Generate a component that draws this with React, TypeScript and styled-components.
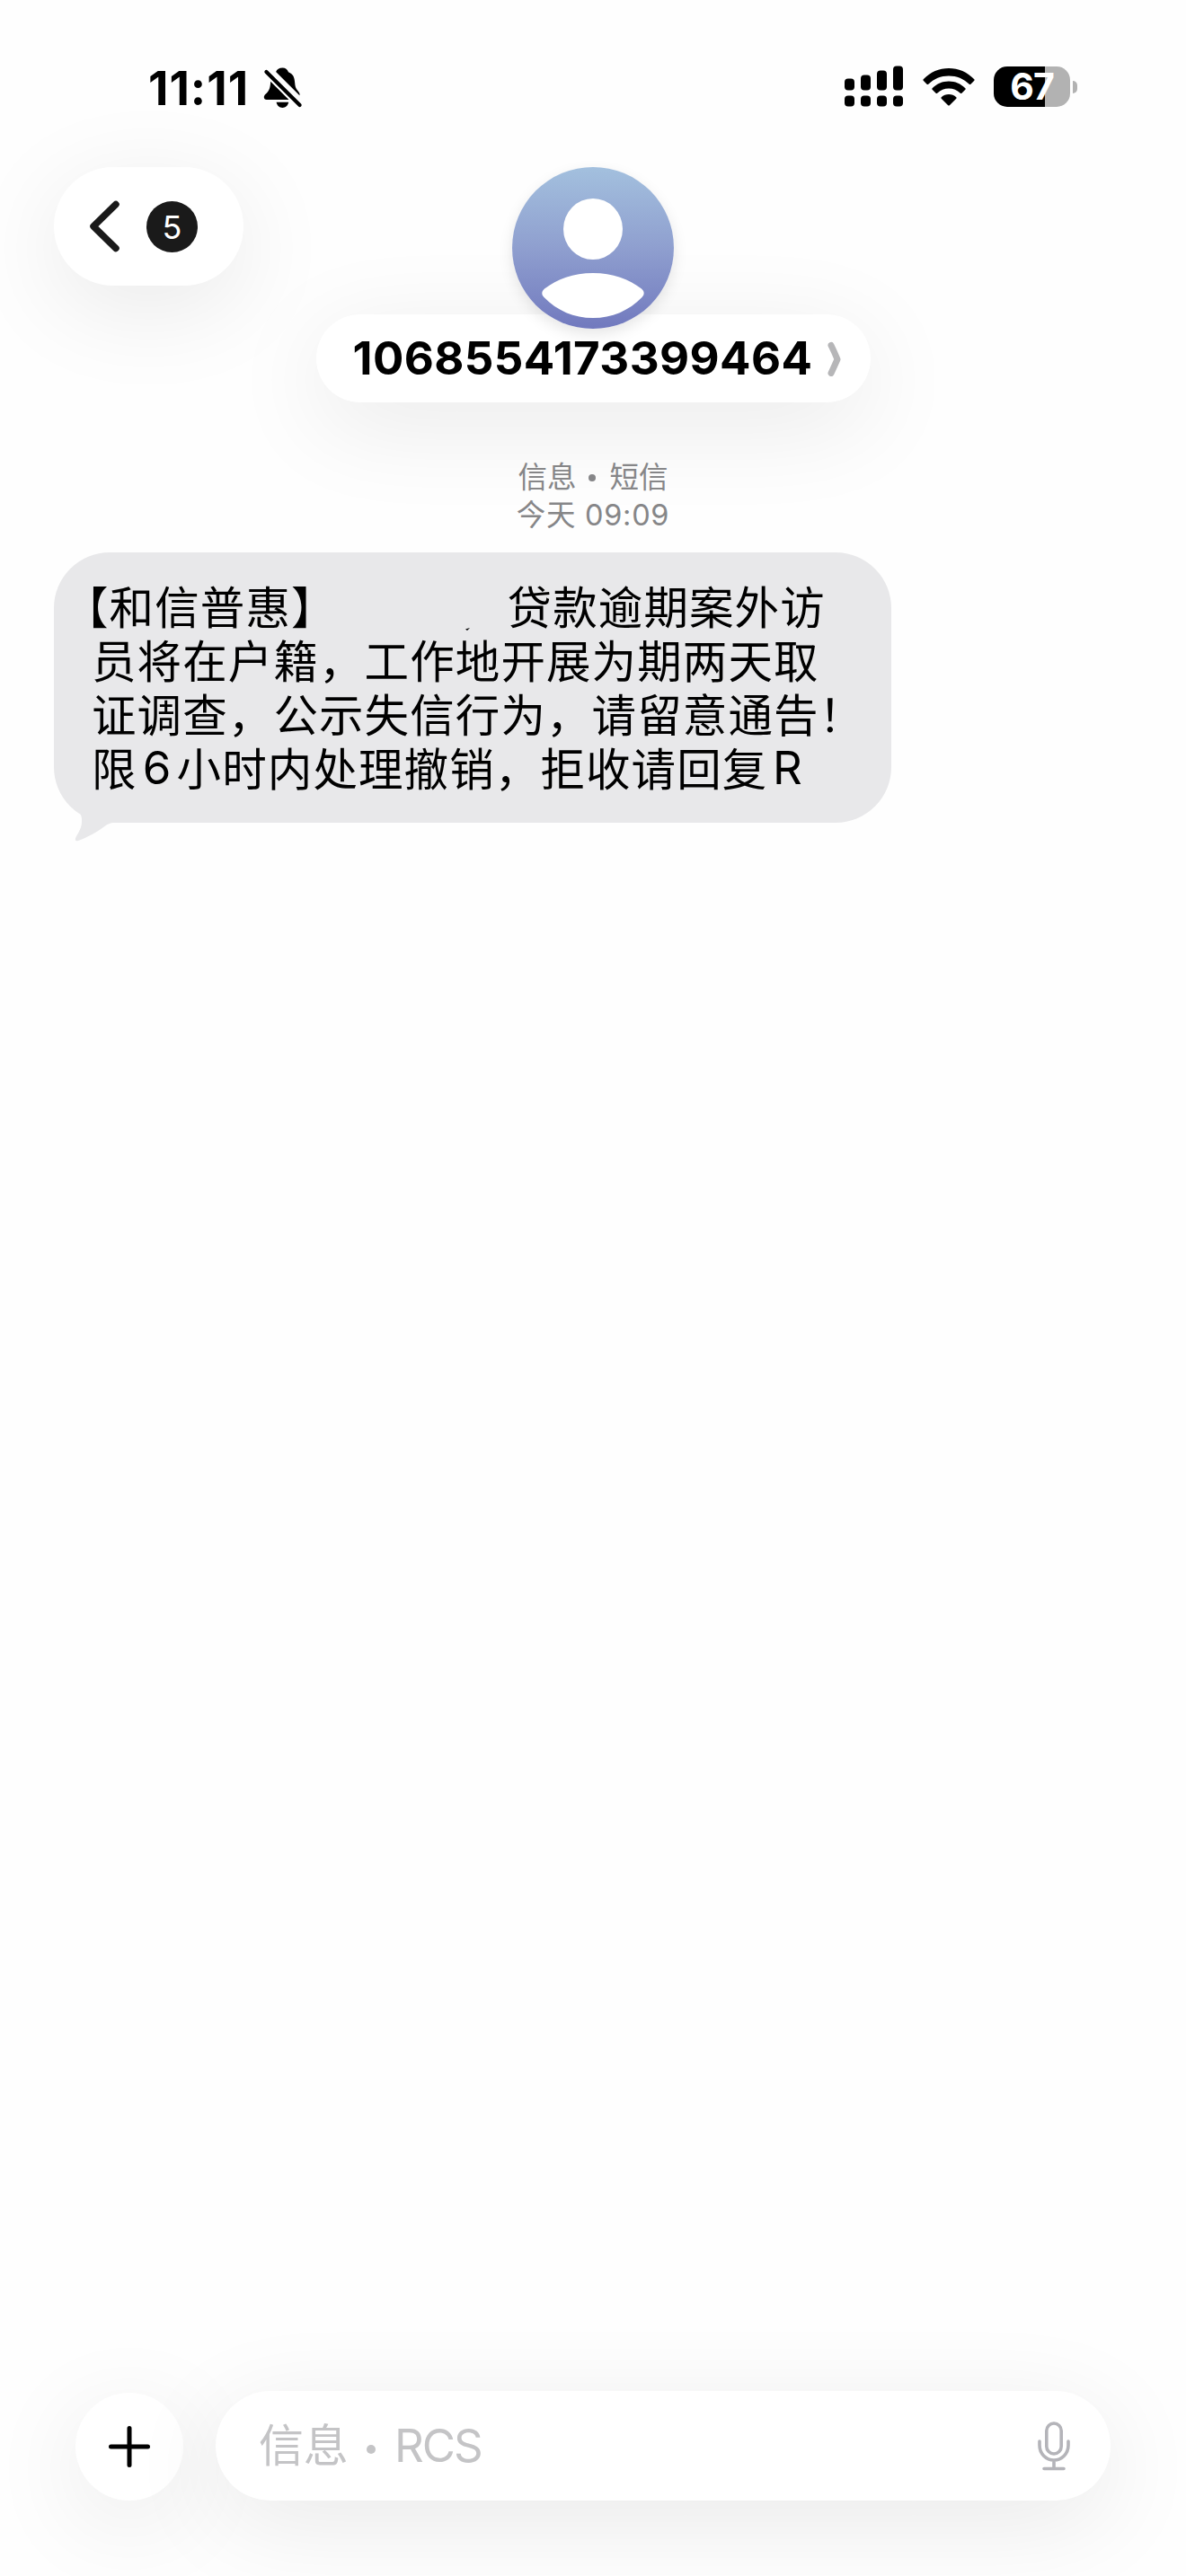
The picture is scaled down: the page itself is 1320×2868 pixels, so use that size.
import React from "react";
import styled, { createGlobalStyle } from "styled-components";

const GlobalStyle = createGlobalStyle`
  *, *::before, *::after { box-sizing: border-box; }
  html, body { margin: 0; padding: 0; background: #fff; }
  body { font-family: Inter, "Noto Sans CJK SC", sans-serif; color: #000; }
  svg { display: block; flex: none; }
`;

const Screen = styled.div`
  width: 1320px;
  height: 2868px;
  display: flex;
  flex-direction: column;
  background: #fefefe;
  overflow: hidden;
`;

const StatusBar = styled.header`
  height: 186px;
  padding: 73px 121px 0 165px;
  display: flex;
  align-items: flex-start;
  justify-content: space-between;
`;

const StatusGroup = styled.div<{ $gap: number }>`
  display: flex;
  align-items: flex-start;
  gap: ${(p) => p.$gap}px;
`;

const Clock = styled.span`
  width: 112px;
  font-size: 52px;
  line-height: 51px;
  font-weight: 650;
  letter-spacing: 1px;
  white-space: nowrap;
`;

const Battery = styled.div`
  display: flex;
  align-items: center;
  gap: 3px;
  margin-top: 1px;
`;

const BatteryCell = styled.div<{ $level: number }>`
  width: 85px;
  height: 45px;
  border-radius: 15px;
  display: flex;
  align-items: center;
  justify-content: center;
  background: linear-gradient(to right, #000 ${(p) => p.$level}%, #b2b2b2 ${(p) => p.$level}%);
  color: #fff;
  font-size: 41px;
  font-weight: 700;
  line-height: 45px;
  letter-spacing: -1px;
`;

const BatteryTip = styled.div`
  width: 5px;
  height: 14px;
  border-radius: 0 7px 7px 0;
  background: #b2b2b2;
`;

const NavBar = styled.nav`
  height: 262px;
  padding: 0 60px;
  display: grid;
  grid-template-columns: 211px 1fr 211px;
  align-items: start;
`;

const floating = "0 24px 110px rgba(0, 0, 0, 0.085)";

const BackButton = styled.button`
  height: 132px;
  padding: 0 51px 0 40px;
  border: 0;
  border-radius: 66px;
  background: #fff;
  box-shadow: ${floating};
  display: flex;
  align-items: center;
  justify-content: space-between;
  font-family: inherit;
`;

const UnreadBadge = styled.span`
  width: 57px;
  height: 57px;
  border-radius: 50%;
  background: #1a1a1a;
  color: #fff;
  font-size: 36px;
  line-height: 59px;
  text-align: center;
`;

const Contact = styled.div`
  display: flex;
  flex-direction: column;
  align-items: center;
`;

const Avatar = styled.div`
  width: 180px;
  height: 180px;
  border-radius: 50%;
  z-index: 1;
  box-shadow: 0 6px 16px rgba(0, 0, 0, 0.1);
`;

const NamePill = styled.div`
  width: 617px;
  height: 98px;
  margin-top: -16px;
  padding: 0 33px 0 41px;
  border-radius: 49px;
  background: #fff;
  box-shadow: ${floating};
  display: flex;
  align-items: center;
  justify-content: space-between;
`;

const ContactName = styled.span`
  font-size: 51px;
  line-height: 100px;
  font-weight: 650;
  letter-spacing: 0.4px;
  white-space: nowrap;
`;

const Conversation = styled.main`
  flex: 1;
  padding: 63px 60px 0;
  display: flex;
  flex-direction: column;
  align-items: flex-start;
`;

const Stamp = styled.div`
  align-self: center;
  height: 104px;
  display: flex;
  flex-direction: column;
  align-items: center;
  color: #868688;
  font-size: 32.5px;
  line-height: 41.5px;
  white-space: pre;
`;

const StampTime = styled.span`
  letter-spacing: 0.7px;
`;

const Bubble = styled.article`
  position: relative;
  width: 932px;
  height: 301px;
  padding: 29px 0 0 42px;
  border-radius: 62px;
  background: #e8e8ea;
`;

const Tail = styled.svg`
  position: absolute;
  left: 14px;
  bottom: -21px;
`;

const Line = styled.p<{ $hang?: boolean }>`
  height: 60px;
  margin: 0 0 0 ${(p) => (p.$hang ? -31 : 0)}px;
  display: flex;
  font-family: "Noto Sans CJK SC", sans-serif;
  font-size: 49.5px;
  line-height: 60px;
  letter-spacing: 1.1px;
  white-space: nowrap;
`;

const Blank = styled.span`
  width: 190px;
  display: flex;
  align-items: flex-end;
  padding: 0 0 1px 143px;
`;

const Latin = styled.span`
  width: 44px;
  padding-top: 1px;
  text-align: center;
  font-family: Inter, sans-serif;
  font-size: 51px;
  letter-spacing: 0;
`;

const Composer = styled.footer`
  height: 206px;
  padding: 0 84px;
  display: flex;
  align-items: flex-start;
  gap: 36px;
`;

const AddButton = styled.button`
  width: 120px;
  height: 120px;
  padding: 0;
  margin-top: 2px;
  border: 0;
  border-radius: 50%;
  background: #fff;
  box-shadow: ${floating};
  display: flex;
  align-items: center;
  justify-content: center;
`;

const Field = styled.div`
  width: 997px;
  height: 122px;
  padding: 0 45px 0 48px;
  border-radius: 61px;
  background: #fff;
  box-shadow: ${floating};
  display: flex;
  align-items: center;
  justify-content: space-between;
`;

const Placeholder = styled.span`
  display: flex;
  align-items: center;
  color: #c4c4c6;
  font-size: 50px;
  line-height: 124px;
  font-weight: 400;
  white-space: nowrap;
`;

const Carrier = styled.span`
  font-size: 51px;
  letter-spacing: -2px;
`;

const Dot = styled.i`
  width: 10px;
  height: 10px;
  margin: 8px 21px 0 20px;
  border-radius: 50%;
  background: currentColor;
`;

const SmallDot = styled(Dot)`
  display: inline-block;
  width: 8px;
  height: 8px;
  margin: 0 15px 7px 14px;
`;

const MutedBell = () => (
  <svg width="44" height="48" viewBox="0 0 44 48">
    <path d="M21.5 2.5c-4 0-6.2 1.6-7.4 4.4L40.400 33.200c.6-1.600-.3-3.200-2-5.200C36 25.500 35.400 22.500 35.200 19.500 34.800 13 33.500 9.500 28 7.200 26.900 4.200 24.700 2.500 21.500 2.500z" />
    <path d="M8.200 17.200 28.800 37.900H3.800c-3.600 0-3.900-4-1.200-6.200 4.200-3.500 5.200-7 5.600-14.500z" />
    <path d="M14.600 40.800h13.600c-.8 3.900-3.300 6.200-6.800 6.200s-6-2.300-6.800-6.200z" />
    <path d="M3.400 7 40.600 44" stroke="#fff" strokeWidth="8.500" />
    <path d="M3.400 7 40.600 44" stroke="#000" strokeWidth="4.200" strokeLinecap="round" />
  </svg>
);

const Signal = () => (
  <svg width="66" height="46" viewBox="0 0 66 46">
    {[14, 10, 5, 0].map((top, i) => (
      <React.Fragment key={top}>
        <rect x={i * 18} y={top + 0.5} width="11" height={27 - top} rx="4" />
        <rect x={i * 18} y="33.500" width="11" height="12" rx="4" />
      </React.Fragment>
    ))}
  </svg>
);

const Wifi = () => (
  <svg width="58" height="45" viewBox="0 -2 58 45">
    <path d="M0.700 13.200C8.500 5.200 18.200 1 29 1s20.500 4.200 28.300 12.200c.5.500.5 1 0 1.500l-3.900 4c-.5.500-1.100.5-1.600 0C45.600 12.600 37.800 9.400 29 9.400S12.400 12.600 6.200 18.700c-.5.500-1.100.5-1.600 0l-3.900-4c-.5-.5-.5-1 0-1.500z" />
    <path d="M10.600 23.200C15.700 18.200 22 15.500 29 15.500s13.300 2.700 18.400 7.700c.5.500.5 1 0 1.500l-4 4c-.5.500-1 .5-1.500.1-3.700-3.400-8-5.200-12.900-5.200s-9.200 1.800-12.900 5.200c-.5.400-1 .4-1.500-.1l-4-4c-.5-.5-.5-1 0-1.500z" />
    <path d="M20.700 33.200C23 31.100 25.800 30 29 30s6 1.100 8.300 3.200c.5.500.5 1 0 1.500l-7.500 7.500c-.5.500-1.100.5-1.600 0l-7.500-7.500c-.5-.5-.5-1 0-1.500z" />
  </svg>
);

const PersonArt = () => (
  <svg width="180" height="180" viewBox="0 0 180 180">
    <defs>
      <linearGradient id="sky" x1="0" y1="0" x2="0" y2="1">
        <stop offset="0" stopColor="#a3c0de" />
        <stop offset="0.5" stopColor="#8f9fcf" />
        <stop offset="1" stopColor="#7179be" />
      </linearGradient>
    </defs>
    <circle cx="90" cy="90" r="90" fill="url(#sky)" />
    <ellipse cx="90" cy="69" rx="33" ry="34" fill="#fff" />
    <path d="M90 118c22 0 40 7 54 17.500 3.500 3 3.500 6.500.5 9.500C130 160 111 168 90 168s-40-8-54.500-23c-3-3-3-6.500.5-9.500C50 125 68 118 90 118z" fill="#fff" />
  </svg>
);

export default function App() {
  return (
    <>
      <GlobalStyle />
      <Screen>
        <StatusBar>
          <StatusGroup $gap={16}>
            <Clock>11:11</Clock>
            <MutedBell />
          </StatusGroup>
          <StatusGroup $gap={21}>
            <Signal />
            <Wifi />
            <Battery>
              <BatteryCell $level={67}>67</BatteryCell>
              <BatteryTip />
            </Battery>
          </StatusGroup>
        </StatusBar>

        <NavBar>
          <BackButton>
            <svg width="33" height="58" viewBox="0 0 33 58" fill="none" stroke="#1a1a1a" strokeWidth="7.500" strokeLinecap="round" strokeLinejoin="round">
              <path d="M29 4.500 4 29l25 24.500" />
            </svg>
            <UnreadBadge>5</UnreadBadge>
          </BackButton>
          <Contact>
            <Avatar>
              <PersonArt />
            </Avatar>
            <NamePill>
              <ContactName>1068554173399464</ContactName>
              <svg width="15" height="39" viewBox="0 0 15 39" fill="none" stroke="#b6b6b8" strokeWidth="7" strokeLinecap="round" strokeLinejoin="round">
                <path d="M4 4.500q3.500 7 7 15.500Q7.500 28 4 35.500" />
              </svg>
            </NamePill>
          </Contact>
        </NavBar>

        <Conversation>
          <Stamp>
            <span>信息<SmallDot />短信</span>
            <StampTime>今天 09:09</StampTime>
          </Stamp>
          <Bubble>
            <Tail width="60" height="46" viewBox="0 0 60 46" fill="#e8e8ea">
              <path d="M8 0C18 10 24 14 23 24c0 6-3 11-6.500 17-1.500 3-.5 5 2.500 4C30 41 40 35 47 30c4-3 7-5 13-5V0z" transform="translate(-6 0)" />
            </Tail>
            <Line $hang>
              <span>【和信普惠】</span>
              <Blank>
                <svg width="6" height="4" viewBox="0 0 6 4"><path d="M0 1.500 5 0 2 3z" /></svg>
              </Blank>
              <span>贷款逾期案外访</span>
            </Line>
            <Line>员将在户籍，工作地开展为期两天取</Line>
            <Line>证调查，公示失信行为，请留意通告！</Line>
            <Line>
              <span>限</span>
              <Latin>6</Latin>
              <span>小时内处理撤销，拒收请回复</span>
              <Latin>R</Latin>
            </Line>
          </Bubble>
        </Conversation>

        <Composer>
          <AddButton>
            <svg width="46" height="46" viewBox="0 0 46 46" stroke="#000" strokeWidth="5" strokeLinecap="round">
              <path d="M23 2.500v41M2.500 23h41" />
            </svg>
          </AddButton>
          <Field>
            <Placeholder>
              <span>信息</span>
              <Dot />
              <Carrier>RCS</Carrier>
            </Placeholder>
            <svg width="36" height="55" viewBox="0 0 36 55" fill="none" stroke="#b4b4b9" strokeWidth="3.600" strokeLinecap="round">
              <rect x="9.800" y="2" width="16.400" height="34" rx="8.200" />
              <path d="M2 22v4.500a16 16.500 0 0 0 32 0V22M18 43v9M7 52.500h22" />
            </svg>
          </Field>
        </Composer>
      </Screen>
    </>
  );
}
